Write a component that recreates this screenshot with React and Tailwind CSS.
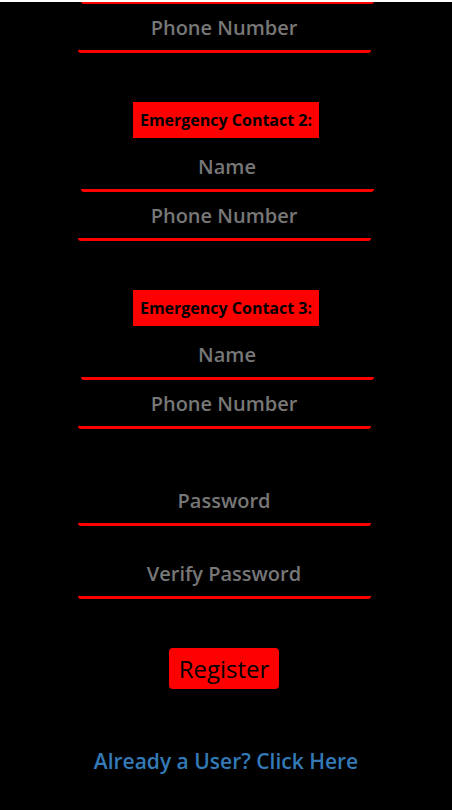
const font = { fontFamily: '"Open Sans", "Noto Sans", sans-serif' };

function Field({ placeholder, type = 'text', className = 'mr-[4px]' }) {
  return (
    <input
      type={type}
      placeholder={placeholder}
      className={`block w-[293px] h-[49px] bg-transparent border-0 border-b-[3px] border-[#ff0000] rounded-[3px] text-center text-[20px] font-semibold text-[#777] placeholder:text-[#777] outline-none ${className}`}
      style={font}
    />
  );
}

function Contact({ n }) {
  return (
    <div className="flex flex-col items-center mt-[49px]">
      <div className="bg-[#ff0000] h-[36px] px-[7px] flex items-center text-black text-[16px] font-bold" style={font}>
        Emergency Contact {n}:
      </div>
      <Field placeholder="Name" className="mt-[5px] ml-[2px]" />
      <Field placeholder="Phone Number" />
    </div>
  );
}

export default function App() {
  return (
    <div className="min-h-screen bg-black overflow-hidden" style={font}>
      <div className="relative z-10 h-[2px] bg-white" />
      <form className="flex flex-col items-center" onSubmit={(e) => e.preventDefault()}>
        <Field placeholder="Name" className="-mt-[47px] ml-[2px]" />
        <Field placeholder="Phone Number" />
        <Contact n={2} />
        <Contact n={3} />
        <Field placeholder="Password" type="password" className="mt-[48px] mr-[4px]" />
        <Field placeholder="Verify Password" type="password" className="mt-[24px] mr-[4px]" />
        <button
          type="submit"
          className="mr-[4px] mt-[49px] h-[41px] px-[10px] bg-[#ff0000] rounded-[4px] text-black text-[24px] leading-none"
          style={font}
        >
          Register
        </button>
        <a href="#" className="mt-[58px] text-[#337ab7] text-[21px] font-semibold leading-[28px]" style={font}>
          Already a User? Click Here
        </a>
      </form>
    </div>
  );
}
